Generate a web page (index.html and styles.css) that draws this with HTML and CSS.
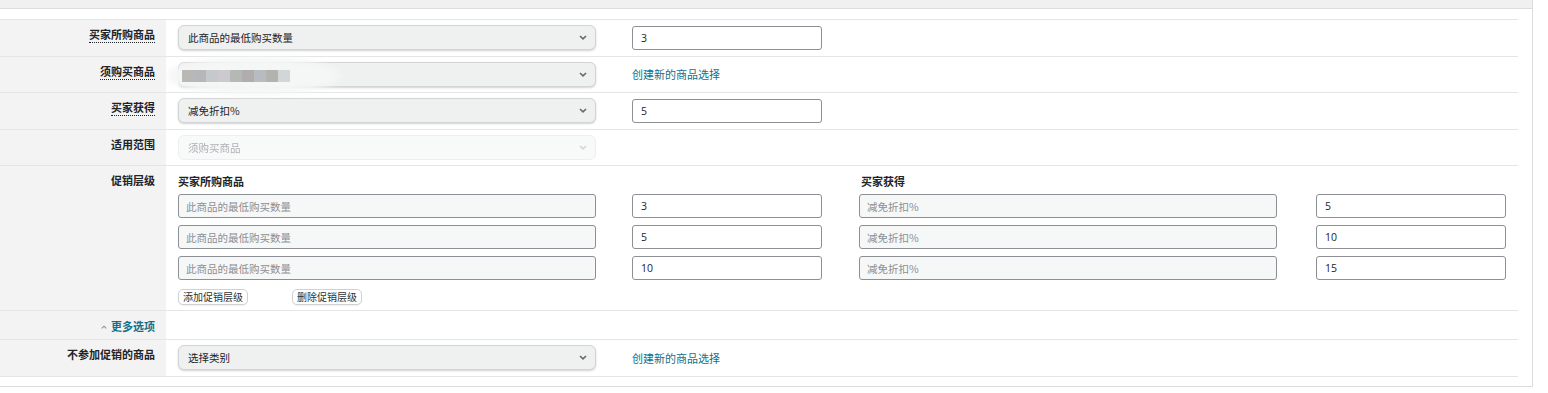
FILE: index.html
```html
<!DOCTYPE html>
<html lang="zh-CN">
<head>
  <meta charset="UTF-8">
  <meta name="viewport" content="width=device-width, initial-scale=1.0">
  <title>促销设置</title>
  <link rel="stylesheet" href="styles.css">
</head>
<body>

  <div class="panel">
    <div class="panel-top"></div> <!-- Grey strip above the form -->

    <div class="form-table">

      <div class="row">
        <div class="row-label"><span class="tip">买家所购商品</span></div>
        <div class="row-field">
          <select class="field-select">
            <option>此商品的最低购买数量</option>
          </select>
          <input class="field-input" type="text" value="3">
        </div>
      </div>

      <div class="row">
        <div class="row-label"><span class="tip">须购买商品</span></div>
        <div class="row-field">
          <div class="blur-wrap">
            <select class="field-select">
              <option></option>
            </select>
            <!-- Product names were blurred in the screenshot -->
            <div class="blur-blob"></div>
            <div class="blur-blocks">
              <span style="background:#bab8b5"></span>
              <span style="background:#b5b8bb"></span>
              <span style="background:#c6c9cc"></span>
              <span style="background:#cdcacf"></span>
              <span style="background:#b6b8b6"></span>
              <span style="background:#b1adad"></span>
              <span style="background:#b8bcc0"></span>
              <span style="background:#b2b2ae"></span>
              <span style="background:#d3d6d9"></span>
            </div>
          </div>
          <a href="#" class="field-link">创建新的商品选择</a>
        </div>
      </div>

      <div class="row">
        <div class="row-label"><span class="tip">买家获得</span></div>
        <div class="row-field">
          <select class="field-select">
            <option>减免折扣%</option>
          </select>
          <input class="field-input" type="text" value="5">
        </div>
      </div>

      <div class="row">
        <div class="row-label">适用范围</div>
        <div class="row-field">
          <select class="field-select" disabled>
            <option>须购买商品</option>
          </select>
        </div>
      </div>

      <div class="row">
        <div class="row-label">促销层级</div>
        <div class="row-field tiers">
          <div class="tier-grid">
            <div class="tier-head">买家所购商品</div>
            <div></div>
            <div class="tier-head">买家获得</div>
            <div></div>

            <input class="tier-text" type="text" value="此商品的最低购买数量" readonly>
            <input class="field-input" type="text" value="3">
            <input class="tier-text" type="text" value="减免折扣%" readonly>
            <input class="field-input" type="text" value="5">

            <input class="tier-text" type="text" value="此商品的最低购买数量" readonly>
            <input class="field-input" type="text" value="5">
            <input class="tier-text" type="text" value="减免折扣%" readonly>
            <input class="field-input" type="text" value="10">

            <input class="tier-text" type="text" value="此商品的最低购买数量" readonly>
            <input class="field-input" type="text" value="10">
            <input class="tier-text" type="text" value="减免折扣%" readonly>
            <input class="field-input" type="text" value="15">
          </div>
          <div class="tier-buttons">
            <button class="small-btn">添加促销层级</button>
            <button class="small-btn">删除促销层级</button>
          </div>
        </div>
      </div>

      <div class="row row-more">
        <div class="row-label">
          <a href="#" class="more-link">
            <svg class="caret" viewBox="0 0 6 4" width="6" height="4">
              <path d="M0.8 3.4 L3 1.2 L5.2 3.4" fill="none" stroke="#8c8f94" stroke-width="1.1"/>
            </svg>
            更多选项
          </a>
        </div>
        <div class="row-field"></div>
      </div>

      <div class="row">
        <div class="row-label">不参加促销的商品</div>
        <div class="row-field">
          <select class="field-select">
            <option>选择类别</option>
          </select>
          <a href="#" class="field-link">创建新的商品选择</a>
        </div>
      </div>

    </div>
  </div>

</body>
</html>
```

FILE: styles.css
```css
body {
  margin: 0;
  padding: 0;
  background-color: #ffffff;
  font-family: "Open Sans", "Noto Sans CJK SC", sans-serif;
  color: #1d2327;
}

/* Outer panel */
.panel {
  width: 1533px;
  box-sizing: border-box;
  border-right: 1px solid #dcdcde;
  border-bottom: 1px solid #dcdcde;
  padding-bottom: 9px; /* White gap under the last row */
}

.panel-top {
  height: 8px;
  background-color: #f0f0f1;
  border-bottom: 1px solid #dcdcde;
}

/* Form table */
.form-table {
  margin: 10px 14px 0 0;
  border-top: 1px solid #e5e5e5;
}

.row {
  display: flex;
  border-bottom: 1px solid #e5e5e5;
}

.row-label {
  width: 166px;
  flex-shrink: 0;
  box-sizing: border-box;
  padding: 7px 11px 0 0;
  background-color: #f3f3f3;
  text-align: right;
  font-family: "Noto Sans CJK SC", sans-serif;
  font-size: 11px;
  font-weight: 700;
  line-height: 14px;
}

/* Labels with a tooltip */
.tip {
  border-bottom: 1px dotted #1d2327;
}

.row-field {
  flex: 1;
  display: flex;
  align-items: center;
  gap: 36px;
  padding: 5.25px 0 5.25px 12px;
}

/* Select boxes */
.field-select {
  appearance: none;
  -webkit-appearance: none;
  width: 418px;
  height: 25px;
  box-sizing: border-box;
  margin: 0;
  padding: 0 24px 0 9px;
  border: 1px solid #d3d4d5;
  border-radius: 6px;
  background-color: #eff0f0;
  background-image: url("data:image/svg+xml,%3Csvg xmlns='http://www.w3.org/2000/svg' width='8' height='5' viewBox='0 0 8 5'%3E%3Cpath d='M1 1 L4 3.8 L7 1' fill='none' stroke='%23646970' stroke-width='1.6'/%3E%3C/svg%3E");
  background-repeat: no-repeat;
  background-position: right 8px center;
  box-shadow: 0 1px 2px rgba(0, 0, 0, 0.18);
  font-family: "Noto Sans CJK SC", sans-serif;
  font-size: 10.5px;
  color: #1d2327;
}

.field-select:disabled {
  background-color: #f6f7f7;
  border-color: #e6e8e9;
  box-shadow: none;
  color: #8c8f94;
  background-image: url("data:image/svg+xml,%3Csvg xmlns='http://www.w3.org/2000/svg' width='8' height='5' viewBox='0 0 8 5'%3E%3Cpath d='M1 1 L4 3.8 L7 1' fill='none' stroke='%23c3c4c7' stroke-width='1.6'/%3E%3C/svg%3E");
}

/* Text inputs */
.field-input,
.tier-text {
  height: 24px;
  box-sizing: border-box;
  margin: 0;
  padding: 0 8px;
  border: 1px solid #8c8f94;
  border-radius: 3px;
  background-color: #ffffff;
  font-family: "Open Sans", "Noto Sans CJK SC", sans-serif;
  font-size: 10.5px;
  color: #1d2327;
}

.field-input {
  width: 190px;
}

.tier-text {
  width: 418px;
  padding-left: 7px;
  background-color: #f6f7f7;
  color: #8c8f94;
  font-family: "Noto Sans CJK SC", sans-serif;
}

.field-link {
  color: #11708a;
  text-decoration: none;
  font-family: "Noto Sans CJK SC", sans-serif;
  font-size: 11px;
}

/* Blurred product field */
.blur-wrap {
  position: relative;
}

.blur-blob {
  position: absolute;
  top: -5px;
  left: -11px;
  width: 174px;
  height: 38px;
  border-radius: 50%;
  background: rgba(244, 245, 245, 0.95);
  filter: blur(3px);
}

.blur-blocks {
  position: absolute;
  top: 8px;
  left: 4px;
  display: flex;
}

.blur-blocks span {
  width: 12px;
  height: 12px;
}

/* Promotion tiers */
.tiers {
  flex-direction: column;
  align-items: flex-start;
  gap: 0;
  padding: 8px 0 5px 12px;
}

.tier-grid {
  display: grid;
  grid-template-columns: 454px 227px 457px 190px;
  row-gap: 7px;
}

.tier-head {
  font-family: "Noto Sans CJK SC", sans-serif;
  font-size: 11px;
  font-weight: 700;
  line-height: 14px;
  margin-left: 2px;
  margin-bottom: -1px;
}

.tier-grid .tier-head:first-child {
  margin-left: 0;
}

.tier-buttons {
  display: flex;
  gap: 44px;
  margin-top: 9px;
}

.small-btn {
  height: 16px;
  box-sizing: border-box;
  margin: 0;
  padding: 0 4px;
  border: 1px solid #d0d1d3;
  border-radius: 5px;
  background-color: #ffffff;
  box-shadow: 0 1px 1px rgba(0, 0, 0, 0.06);
  font-family: "Noto Sans CJK SC", sans-serif;
  font-size: 10px;
  line-height: 14px;
  color: #2c3338;
}

/* More options row */
.row-more .row-label {
  padding-top: 8px;
  padding-bottom: 6px;
}

.row-more .row-field {
  padding: 0;
}

.more-link {
  color: #11708a;
  text-decoration: none;
}

.caret {
  margin-right: 2px;
  vertical-align: 2px;
}
```
